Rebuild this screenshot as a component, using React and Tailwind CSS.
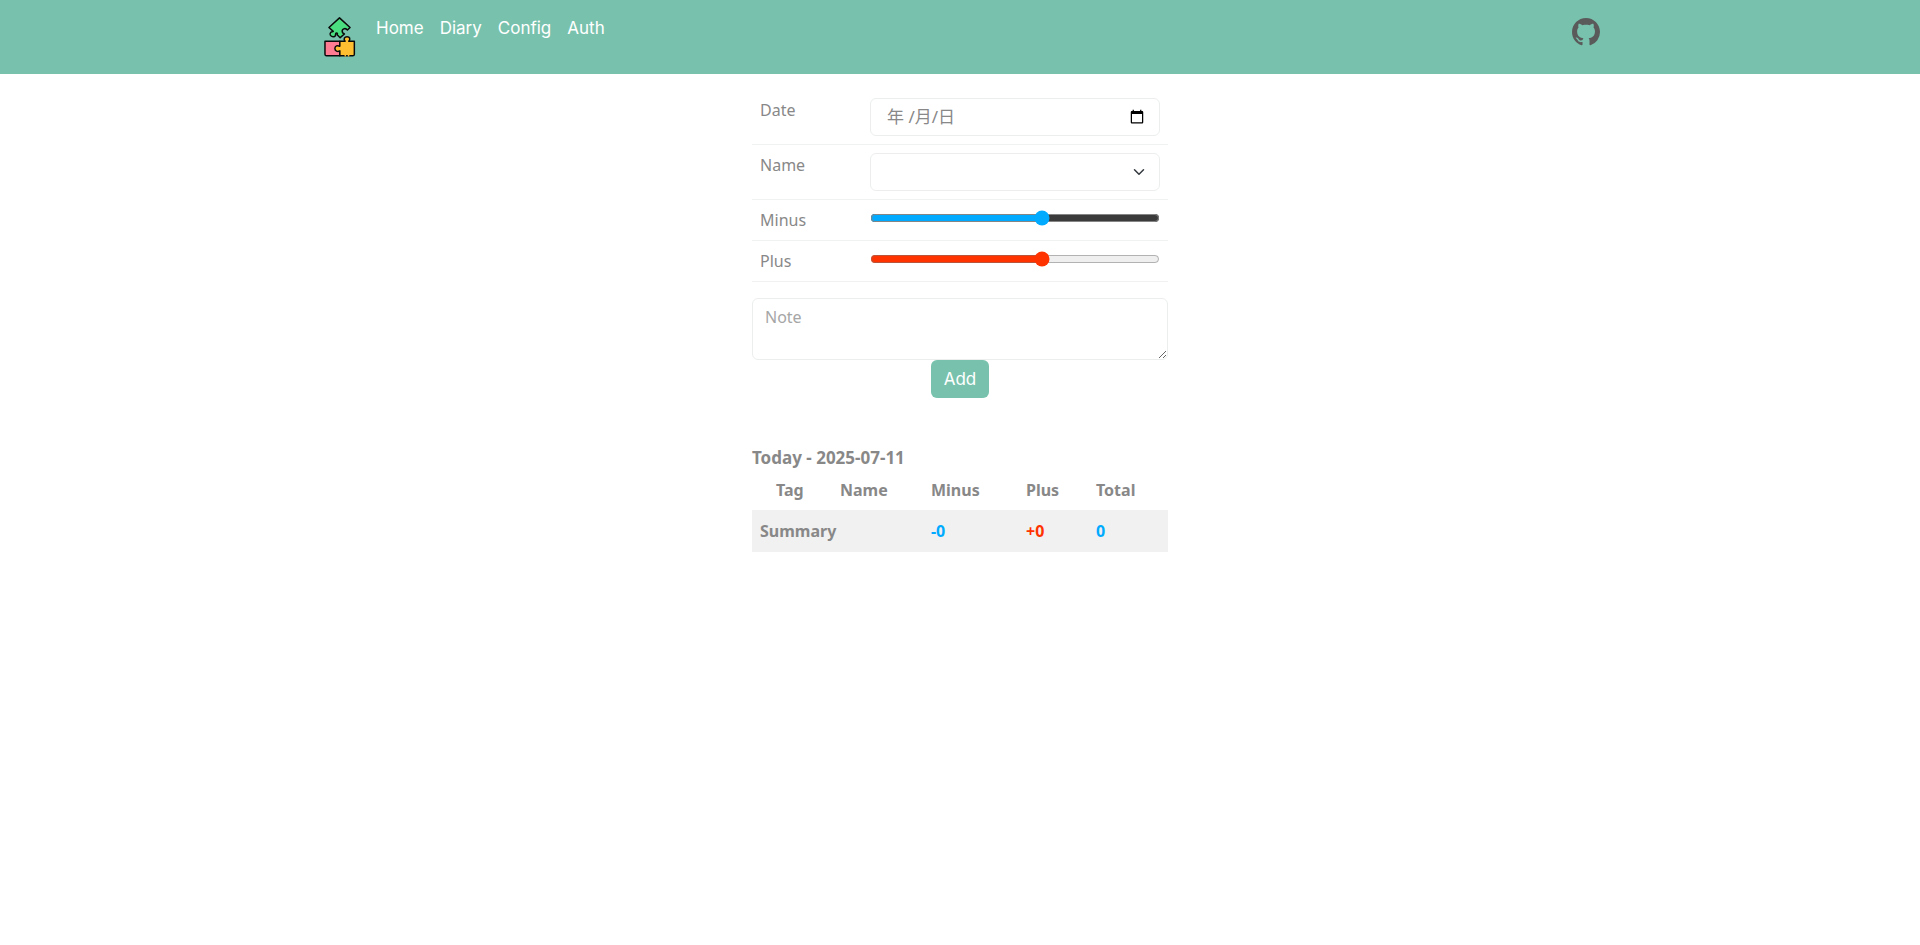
import { BsGithub } from "react-icons/bs";

const links = ["Home", "Diary", "Config", "Auth"];

function PuzzleLogo() {
  return (
    <svg viewBox="40 48 100 126" className="h-[42px] w-[33px]" stroke="#0a0a0a" strokeWidth="4.5" strokeLinejoin="round" strokeLinecap="round" aria-hidden="true">
      <path fill="#4ade80" d="M90 53 L122 82 L114 90 C108 82 95 86 99 97 C101 101 104 100 105 102 L92 113 L83 104 C86 98 79 96 78 103 C80 111 66 113 62 105 C60 98 66 94 71 94 L58 82 Z" />
      <path fill="#ff7b92" d="M46 124 H91 V168 H51 Q46 168 46 163 Z" />
      <path fill="#ffbf30" d="M91 124 H107 C101 117 105 110 113 110 C121 110 124 117 118 124 H135 V163 Q135 168 130 168 H91 V153 C84 157 76 153 76 146 C76 138 84 135 91 139 Z" />
      <path stroke="#ffbf30" d="M107 168 h1 M117 168 h1" />
    </svg>
  );
}

function Row({ label, id, children }) {
  return (
    <div className="grid grid-cols-[110px_1fr] border-b border-[#f0f1f1]">
      <label htmlFor={id} className="p-2">{label}</label>
      <div className="p-2">{children}</div>
    </div>
  );
}

export default function App() {
  return (
    <div className="min-h-screen bg-white font-['Noto_Sans','Noto_Sans_CJK_SC',sans-serif] text-base text-[#888]">
      <header className="bg-[#78c2ad]">
        <div className="mx-auto flex h-[74px] max-w-[1320px] items-start justify-between px-5 pt-4">
          <nav className="flex items-start gap-5 pl-[3px] font-['Inter',sans-serif]">
            <a href="#home" aria-label="Puzzle home"><PuzzleLogo /></a>
            <ul className="flex gap-4 text-[17px] leading-6 text-white">
              {links.map((l) => (
                <li key={l}><a href={"#" + l.toLowerCase()}>{l}</a></li>
              ))}
            </ul>
          </nav>
          <a href="#github" aria-label="GitHub" className="pt-0.5 text-[#5a5a5a]">
            <BsGithub className="size-7" />
          </a>
        </div>
      </header>

      <main className="mx-auto max-w-[416px] pt-4">
        <form onSubmit={(e) => e.preventDefault()}>
          <Row label="Date" id="date">
            <div className="relative">
              <input id="date" type="date" className="block h-[38px] w-full rounded-md border border-[#eceeee] bg-white px-3 text-black outline-none [&::-webkit-datetime-edit]:opacity-0" />
              <span className="pointer-events-none absolute inset-y-0 left-[17px] flex items-center text-[17px] text-[#888]">年 /月/日</span>
            </div>
          </Row>
          <Row label="Name" id="name">
            <div className="relative">
              <select id="name" defaultValue="" className="block h-[38px] w-full appearance-none rounded-md border border-[#eceeee] bg-white px-3 outline-none">
                <option value=""></option>
              </select>
              <svg viewBox="0 0 16 16" className="pointer-events-none absolute inset-y-0 right-[15px] my-auto h-3 w-3" fill="none" stroke="#343a40" strokeWidth="2" strokeLinecap="round" strokeLinejoin="round">
                <path d="m2 5 6 6 6-6" />
              </svg>
            </div>
          </Row>
          <Row label="Minus" id="minus">
            <input id="minus" type="range" min="0" max="10" defaultValue="6" className="mt-0.5 block w-full accent-[#00aaff]" />
          </Row>
          <Row label="Plus" id="plus">
            <input id="plus" type="range" min="0" max="10" defaultValue="6" className="mt-0.5 block w-full accent-[#ff3300]" />
          </Row>
          <textarea aria-label="Note" placeholder="Note" rows={2} className="mt-4 block h-[62px] w-full resize rounded-md border border-[#eceeee] px-3 py-1.5 outline-none placeholder:text-[#a6a6a6]" />
          <div className="flex justify-center">
            <button className="h-[38px] rounded-md bg-[#78c2ad] px-[13px] font-['Inter',sans-serif] text-[17px] leading-6 text-white">Add</button>
          </div>
        </form>

        <section className="mt-12">
          <h2 className="text-[17px] leading-6 font-bold">Today - 2025-07-11</h2>
          <table className="w-full table-fixed text-left font-bold">
            <colgroup>
              <col className="w-[80px]" />
              <col className="w-[91px]" />
              <col className="w-[95px]" />
              <col className="w-[70px]" />
              <col />
            </colgroup>
            <thead>
              <tr>
                <th className="py-2 pl-6">Tag</th>
                <th className="p-2">Name</th>
                <th className="p-2">Minus</th>
                <th className="p-2">Plus</th>
                <th className="p-2">Total</th>
              </tr>
            </thead>
            <tbody>
              <tr className="h-[42px] bg-[#f1f1f1]">
                <th colSpan={2} className="p-2">Summary</th>
                <td className="p-2 text-[#00aaff]">-0</td>
                <td className="p-2 text-[#ff3300]">+0</td>
                <td className="p-2 text-[#00aaff]">0</td>
              </tr>
            </tbody>
          </table>
        </section>
      </main>
    </div>
  );
}
